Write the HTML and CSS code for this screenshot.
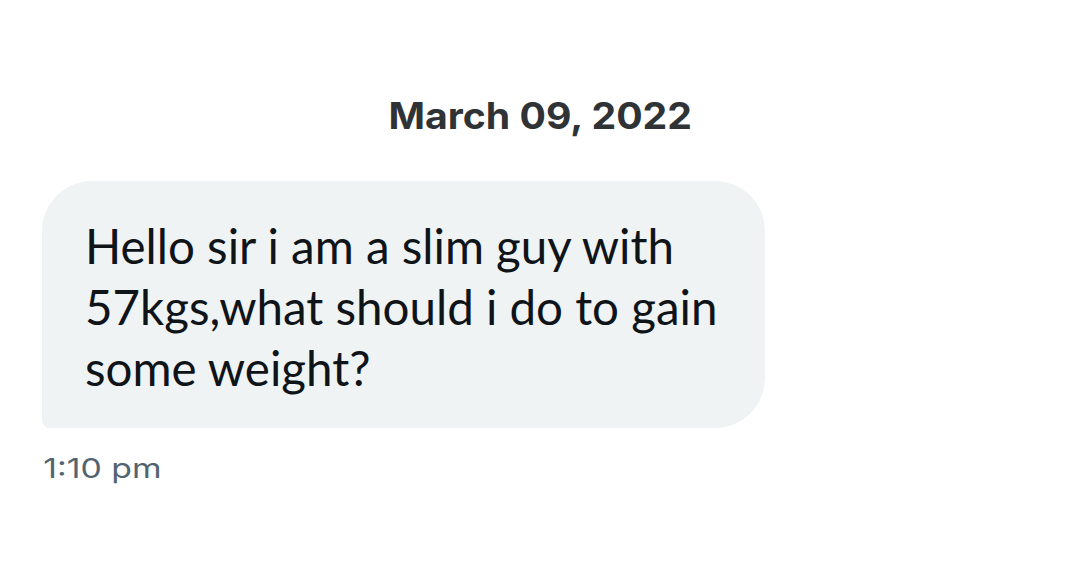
FILE: index.html
```html
<!DOCTYPE html>
<html>
<head>
<meta charset="utf-8">
<link rel="stylesheet" href="styles.css">
</head>
<body>
<div class="chat">
  <div class="date"><span class="date-text">March 09, 2022</span></div>
  <div class="msg">
    <div class="bubble">Hello sir i am a slim guy with 57kgs,what should i do to gain some weight?</div>
    <div class="time">1:10 pm</div>
  </div>
</div>
</body>
</html>
```
FILE: styles.css
```css
html, body {
  margin: 0;
  padding: 0;
  background: #ffffff;
}
.chat {
  width: 1080px;
  height: 572px;
  display: flex;
  flex-direction: column;
}
.date {
  margin-top: 94px;
  text-align: center;
  font-family: Inter, "Liberation Sans", sans-serif;
  font-weight: bold;
  font-size: 37px;
  line-height: 44px;
  color: #2f3336;
}
.date-text {
  display: inline-block;
  transform: scaleX(1.06);
  transform-origin: center;
}
.msg {
  margin-top: 43px;
  padding-left: 42px;
  display: flex;
  flex-direction: column;
  align-items: flex-start;
}
.bubble {
  box-sizing: border-box;
  width: 723px;
  height: 247px;
  background: #eff3f4;
  border-radius: 50px 50px 50px 8px;
  padding: 34px 20px 0 43px;
  font-family: Lato, "Open Sans", sans-serif;
  font-size: 47.5px;
  line-height: 61px;
  color: #0f1419;
}
.time {
  margin-top: 21px;
  font-family: Inter, "Liberation Sans", sans-serif;
  font-size: 27px;
  line-height: 40px;
  color: #536471;
  padding-left: 1px;
  transform: scaleX(1.25);
  transform-origin: left center;
}
```
